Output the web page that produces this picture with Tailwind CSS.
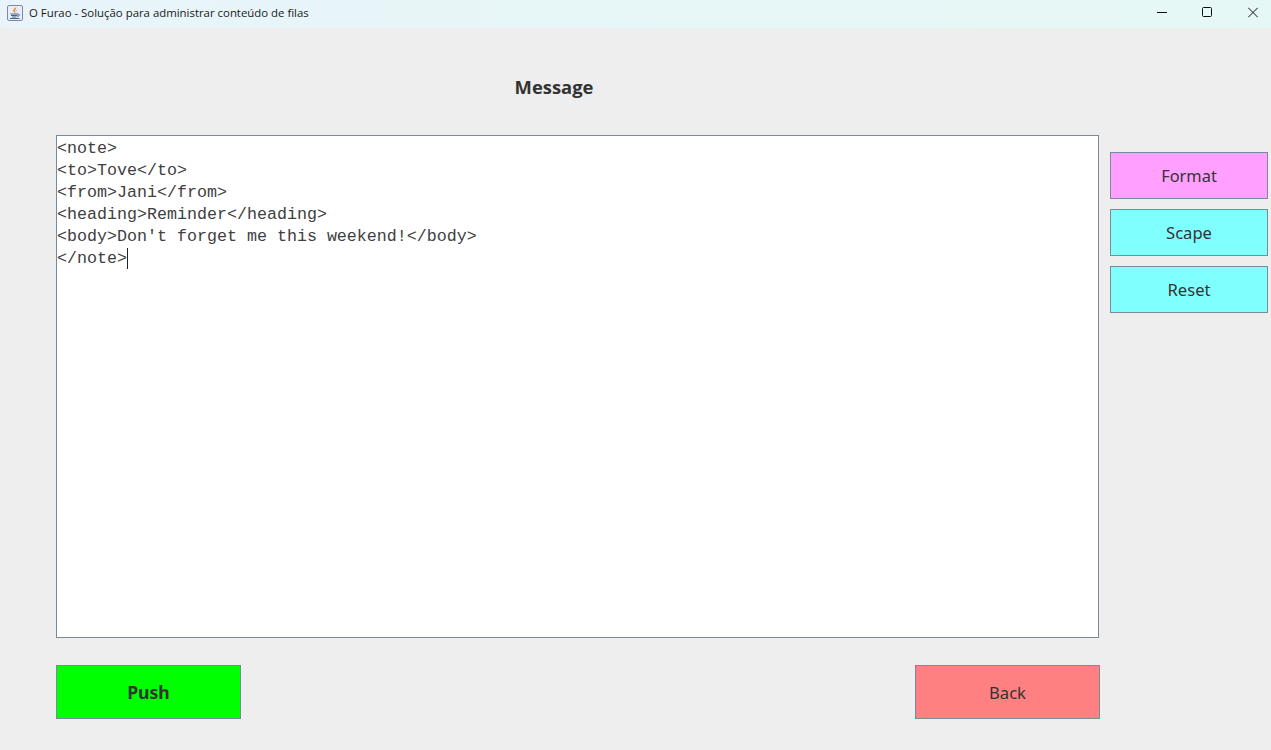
<!DOCTYPE html>
<html lang="pt">
<head>
<meta charset="utf-8">
<title>O Furao</title>
<script src="https://cdn.jsdelivr.net/npm/@tailwindcss/browser@4"></script>
</head>
<body class="w-[1271px] h-[750px] overflow-hidden bg-[#eeeeee] font-['Noto_Sans',sans-serif] text-[#333333]">
  <header class="h-[28px] flex items-center justify-between bg-linear-to-r from-[#e8f4f9] to-[#e6f8f6] pb-[3px]">
    <div class="flex items-center pl-[7px] gap-[6px]">
      <svg width="16" height="16" viewBox="0 0 16 16" class="shrink-0">
        <rect x="0.500" y="0.500" width="15" height="15" rx="1.500" fill="#e9edf5" stroke="#7d8aa3"/>
        <path d="M9 2c1 1.800-2 3-1.200 4.800.2.500.5.800.9 1.200-1.800-.5-3-1.700-2.300-3.200C6.900 3.600 8.700 3.300 9 2z" fill="#e8781f"/>
        <path d="M9.800 4.500c.3 1.200-1.300 1.700-.8 3-.9-1.200.2-2 .8-3z" fill="#e8781f"/>
        <path d="M3.500 9h7.500M4 10.500h6.500M5 12h4.500" stroke="#44648f" fill="none"/>
        <path d="M11 9.200c1.900-.3 1.900 1.900-.6 2.300" fill="none" stroke="#44648f"/>
        <path d="M3 13.500h9.500" stroke="#44648f"/>
      </svg>
      <span class="text-[11.4px] leading-none text-[#1a1a1a] font-['Open_Sans',sans-serif]">O Furao - Solução para administrar conteúdo de filas</span>
    </div>
    <div class="flex items-center">
      <button class="w-[36px] h-[25px] mr-[9px] flex items-center justify-center">
        <svg width="10" height="11" viewBox="0 0 10 11"><path d="M0 5.500h10" stroke="#111" fill="none"/></svg>
      </button>
      <button class="w-[36px] h-[25px] mr-[10px] flex items-center justify-center">
        <svg width="10" height="11" viewBox="0 0 10 11"><rect x="0.500" y="0.500" width="9" height="9" rx="1" stroke="#111" fill="none"/></svg>
      </button>
      <button class="w-[36px] h-[25px] flex items-center justify-center">
        <svg width="10" height="11" viewBox="0 0 10 11"><path d="M0.200 0.700l9.600 9.600M9.800 0.700l-9.600 9.600" stroke="#111" fill="none"/></svg>
      </button>
    </div>
  </header>

  <h1 class="h-[107px] w-[1108px] pt-[46px] text-center text-[18.4px] leading-[26px] font-bold text-[#333333] font-['Open_Sans',sans-serif]">Message</h1>

  <main class="flex pl-[56px] gap-[11px]">
    <div class="w-[1043px]">
      <div class="h-[503px] bg-white border border-[#7a8a99] pt-[2px] font-['Liberation_Mono',monospace] text-[16.67px] leading-[22px] text-[#404040] whitespace-pre"><div>&lt;note&gt;</div><div>&lt;to&gt;Tove&lt;/to&gt;</div><div>&lt;from&gt;Jani&lt;/from&gt;</div><div>&lt;heading&gt;Reminder&lt;/heading&gt;</div><div>&lt;body&gt;Don't forget me this weekend!&lt;/body&gt;</div><div class="flex"><span>&lt;/note&gt;</span><span class="w-px h-[21px] bg-[#222222]"></span></div></div>
      <div class="flex justify-between w-[1044px] mt-[27px]">
        <button class="w-[185px] h-[54px] pt-[1px] bg-[#00ff00] border border-[#7a8a99] text-[17.6px] font-bold">Push</button>
        <button class="w-[185px] h-[54px] pt-[2px] bg-[#ff8080] border border-[#7a8a99] text-[16.6px]">Back</button>
      </div>
    </div>
    <aside class="flex flex-col gap-[10px] pt-[17px]">
      <button class="w-[158px] h-[47px] pt-[1px] bg-[#ff9fff] border border-[#7a8a99] text-[16.4px]">Format</button>
      <button class="w-[158px] h-[47px] pt-[1px] bg-[#80ffff] border border-[#7a8a99] text-[16.6px]">Scape</button>
      <button class="w-[158px] h-[47px] pt-[1px] bg-[#80ffff] border border-[#7a8a99] text-[16.6px]">Reset</button>
    </aside>
  </main>
</body>
</html>
